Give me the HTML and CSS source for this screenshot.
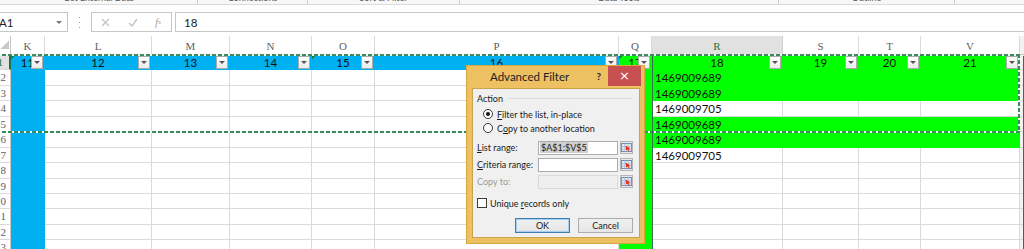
FILE: index.html
```html
<!DOCTYPE html>
<html>
<head>
<meta charset="utf-8">
<link rel="stylesheet" href="styles.css">
</head>
<body>
<div class="rtail">
  <div>Get External Data</div>
  <div>Connections</div>
  <div>Sort &amp; Filter</div>
  <div>Data Tools</div>
  <div>Outline</div>
  <div class="last"></div>
</div>

<div class="fbar">
  <div class="namebox"><span class="nb-text">A1</span><span class="dd"></span></div>
  <div class="grip"><svg width="3" height="11" viewBox="0 0 3 11"><rect x="1" y="0" width="1" height="1" fill="#9a9a9a"/><rect x="1" y="5" width="1" height="1" fill="#9a9a9a"/><rect x="1" y="10" width="1" height="1" fill="#9a9a9a"/></svg></div>
  <div class="fxbox">
    <span class="ic"><svg width="9" height="9" viewBox="0 0 9 9"><path d="M1 1L8 8M8 1L1 8" stroke="#c4c4c4" stroke-width="1.3"/></svg></span>
    <span class="ic"><svg width="10" height="9" viewBox="0 0 10 9"><path d="M1 5L4 8L9 1" stroke="#c4c4c4" stroke-width="1.4" fill="none"/></svg></span>
    <span class="ic fx"><i>f</i><sub>x</sub></span>
  </div>
  <div class="finput">18</div>
</div>

<div class="sheet">
  <!-- header row -->
  <div class="h corner"></div>
  <div class="h">K</div>
  <div class="h">L</div>
  <div class="h">M</div>
  <div class="h">N</div>
  <div class="h">O</div>
  <div class="h">P</div>
  <div class="h">Q</div>
  <div class="h sel">R</div>
  <div class="h">S</div>
  <div class="h">T</div>
  <div class="h">V</div>
  <div class="h edge"></div>

  <!-- row 1 -->
  <div class="rh sel">1</div>
  <div class="c blue hc tri"><span class="n">11</span><span class="fb"></span></div>
  <div class="c blue hc"><span class="n">12</span><span class="fb"></span></div>
  <div class="c blue hc"><span class="n">13</span><span class="fb"></span></div>
  <div class="c blue hc"><span class="n">14</span><span class="fb"></span></div>
  <div class="c blue hc tri"><span class="n">15</span><span class="fb"></span></div>
  <div class="c blue hc"><span class="n">16</span><span class="fb"></span></div>
  <div class="c green hc tri"><span class="n">17</span><span class="fb"></span></div>
  <div class="c green hc"><span class="n">18</span><span class="fb"></span></div>
  <div class="c green hc"><span class="n">19</span><span class="fb"></span></div>
  <div class="c green hc"><span class="n">20</span><span class="fb"></span></div>
  <div class="c green hc"><span class="n">21</span><span class="fb"></span></div>
  <div class="c edge"></div>

  <!-- row 2 -->
  <div class="rh">2</div>
  <div class="c blue"></div><div class="c"></div><div class="c"></div><div class="c"></div><div class="c"></div><div class="c"></div>
  <div class="c green"></div><div class="c green t">1469009689</div><div class="c green"></div><div class="c green"></div><div class="c green"></div>
  <div class="c edge"></div>

  <!-- row 3 -->
  <div class="rh">3</div>
  <div class="c blue"></div><div class="c"></div><div class="c"></div><div class="c"></div><div class="c"></div><div class="c"></div>
  <div class="c green"></div><div class="c green t">1469009689</div><div class="c green"></div><div class="c green"></div><div class="c green"></div>
  <div class="c edge"></div>

  <!-- row 4 -->
  <div class="rh">4</div>
  <div class="c blue"></div><div class="c"></div><div class="c"></div><div class="c"></div><div class="c"></div><div class="c"></div>
  <div class="c green"></div><div class="c t">1469009705</div><div class="c"></div><div class="c"></div><div class="c"></div>
  <div class="c edge"></div>

  <!-- row 5 -->
  <div class="rh">5</div>
  <div class="c blue"></div><div class="c"></div><div class="c"></div><div class="c"></div><div class="c"></div><div class="c"></div>
  <div class="c green"></div><div class="c green t">1469009689</div><div class="c green"></div><div class="c green"></div><div class="c green"></div>
  <div class="c edge"></div>

  <!-- row 6 -->
  <div class="rh">6</div>
  <div class="c blue"></div><div class="c"></div><div class="c"></div><div class="c"></div><div class="c"></div><div class="c"></div>
  <div class="c green"></div><div class="c green t">1469009689</div><div class="c green"></div><div class="c green"></div><div class="c green"></div>
  <div class="c edge"></div>

  <!-- row 7 -->
  <div class="rh">7</div>
  <div class="c blue"></div><div class="c"></div><div class="c"></div><div class="c"></div><div class="c"></div><div class="c"></div>
  <div class="c green"></div><div class="c t">1469009705</div><div class="c"></div><div class="c"></div><div class="c"></div>
  <div class="c edge"></div>

  <!-- rows 8-13 -->
  <div class="rh">8</div>
  <div class="c blue"></div><div class="c"></div><div class="c"></div><div class="c"></div><div class="c"></div><div class="c"></div>
  <div class="c green"></div><div class="c"></div><div class="c"></div><div class="c"></div><div class="c"></div>
  <div class="c edge"></div>

  <div class="rh">9</div>
  <div class="c blue"></div><div class="c"></div><div class="c"></div><div class="c"></div><div class="c"></div><div class="c"></div>
  <div class="c green"></div><div class="c"></div><div class="c"></div><div class="c"></div><div class="c"></div>
  <div class="c edge"></div>

  <div class="rh">10</div>
  <div class="c blue"></div><div class="c"></div><div class="c"></div><div class="c"></div><div class="c"></div><div class="c"></div>
  <div class="c green"></div><div class="c"></div><div class="c"></div><div class="c"></div><div class="c"></div>
  <div class="c edge"></div>

  <div class="rh">11</div>
  <div class="c blue"></div><div class="c"></div><div class="c"></div><div class="c"></div><div class="c"></div><div class="c"></div>
  <div class="c green"></div><div class="c"></div><div class="c"></div><div class="c"></div><div class="c"></div>
  <div class="c edge"></div>

  <div class="rh">12</div>
  <div class="c blue"></div><div class="c"></div><div class="c"></div><div class="c"></div><div class="c"></div><div class="c"></div>
  <div class="c green"></div><div class="c"></div><div class="c"></div><div class="c"></div><div class="c"></div>
  <div class="c edge"></div>

  <div class="rh">13</div>
  <div class="c blue"></div><div class="c"></div><div class="c"></div><div class="c"></div><div class="c"></div><div class="c"></div>
  <div class="c green"></div><div class="c"></div><div class="c"></div><div class="c"></div><div class="c"></div>
  <div class="c edge"></div>

  <!-- overlays -->
  <div class="marquee"></div>
  <div class="active"></div>
</div>

<div class="dlg">
  <div class="dlg-title">
    <span class="dt">Advanced Filter</span>
    <span class="help">?</span>
    <span class="close">×</span>
  </div>
  <div class="dlg-body">
    <div class="grp"><span>Action</span><i class="rule"></i></div>
    <div class="opt"><span class="radio on"></span><span><u>F</u>ilter the list, in-place</span></div>
    <div class="opt"><span class="radio"></span><span>C<u>o</u>py to another location</span></div>
    <div class="field first">
      <span class="fl"><u>L</u>ist range:</span>
      <span class="inp"><span class="seltext">$A$1:$V$5</span></span>
      <span class="ref"><svg width="11" height="9" viewBox="0 0 11 9"><rect x="0.5" y="0.5" width="10" height="8" fill="#dfe8f5" stroke="#6f8db8"/><path d="M0.5 3.5H10.5M0.5 6.2H10.5M3.8 0.5V8.5M7.2 0.5V8.5" stroke="#a9bcd8" stroke-width="0.8"/><path d="M4.5 2.5L9.5 5.5L7.6 6L8.6 8L7.6 8.5L6.6 6.5L5.2 7.6Z" fill="#e2321d"/></svg></span>
    </div>
    <div class="field">
      <span class="fl"><u>C</u>riteria range:</span>
      <span class="inp"></span>
      <span class="ref"><svg width="11" height="9" viewBox="0 0 11 9"><rect x="0.5" y="0.5" width="10" height="8" fill="#dfe8f5" stroke="#6f8db8"/><path d="M0.5 3.5H10.5M0.5 6.2H10.5M3.8 0.5V8.5M7.2 0.5V8.5" stroke="#a9bcd8" stroke-width="0.8"/><path d="M4.5 2.5L9.5 5.5L7.6 6L8.6 8L7.6 8.5L6.6 6.5L5.2 7.6Z" fill="#e2321d"/></svg></span>
    </div>
    <div class="field dis">
      <span class="fl">Copy to:</span>
      <span class="inp"></span>
      <span class="ref"><svg width="11" height="9" viewBox="0 0 11 9"><rect x="0.5" y="0.5" width="10" height="8" fill="#dfe8f5" stroke="#6f8db8"/><path d="M0.5 3.5H10.5M0.5 6.2H10.5M3.8 0.5V8.5M7.2 0.5V8.5" stroke="#a9bcd8" stroke-width="0.8"/><path d="M4.5 2.5L9.5 5.5L7.6 6L8.6 8L7.6 8.5L6.6 6.5L5.2 7.6Z" fill="#e2321d"/></svg></span>
    </div>
    <div class="chk"><span class="box"></span><span>Unique <u>r</u>ecords only</span></div>
    <div class="btns"><span class="btn def">OK</span><span class="btn">Cancel</span></div>
  </div>
</div>
</body>
</html>
```
FILE: styles.css
```css
html, body {
  margin: 0;
  padding: 0;
}
body {
  width: 1024px;
  height: 249px;
  overflow: hidden;
  background: #ffffff;
  font-family: Lato, "Liberation Sans", sans-serif;
  position: relative;
  color: #000;
}

/* ribbon remnant */
.rtail {
  height: 4px;
  border-bottom: 1px solid #dcdcdc;
  background: #f7f7f7;
  display: grid;
  grid-template-columns: 198px 110px 152px 319px 176px 1fr;
  overflow: hidden;
}
.rtail > div {
  height: 14px;
  margin-top: -8px;
  border-right: 1px solid #d0d0d0;
  text-align: center;
  font-size: 9px;
  line-height: 12px;
  color: #555;
  white-space: nowrap;
}
.rtail > .last { border-right: none; }

/* formula bar */
.fbar {
  display: flex;
  height: 20px;
  margin-top: 7px;
  margin-bottom: 4px;
  font-size: 11.5px;
}
.namebox {
  width: 69px;
  margin-left: -1px;
  box-sizing: border-box;
  border: 1px solid #c6c6c6;
  display: flex;
  align-items: center;
  justify-content: space-between;
  padding-right: 5px;
}
.nb-text {
  margin-left: -1px;
  color: #222;
}
.dd {
  width: 0;
  height: 0;
  border-left: 3px solid transparent;
  border-right: 3px solid transparent;
  border-top: 3px solid #777;
}
.grip {
  width: 23px;
  display: flex;
  align-items: center;
  justify-content: center;
}
.fxbox {
  width: 81px;
  box-sizing: border-box;
  border: 1px solid #c6c6c6;
  display: grid;
  grid-template-columns: 27px 27px 1fr;
  align-items: center;
  justify-items: center;
}
.ic { display: flex; align-items: center; }
.fx {
  font-family: "Liberation Serif", serif;
  color: #a8a8a8;
  font-size: 11px;
  margin-left: -1px;
}
.fx sub { font-size: 7px; font-style: italic; vertical-align: -1px; }
.finput {
  flex: 1;
  margin-left: 3px;
  box-sizing: border-box;
  border: 1px solid #c6c6c6;
  border-right: none;
  padding-left: 8px;
  display: flex;
  align-items: center;
  color: #222;
}

/* sheet */
.sheet {
  position: relative;
  display: grid;
  grid-template-columns: 11px 34px 107px 78px 82px 63px 244px 33px 131px 76px 62px 99px 4px;
  grid-template-rows: 19px repeat(13, 15.45px);
}
.h {
  box-sizing: border-box;
  border-right: 1px solid #dadada;
  border-bottom: 1px solid #c8c8c8;
  display: flex;
  align-items: center;
  justify-content: center;
  padding-top: 2px;
  font-family: "Liberation Serif", serif;
  font-size: 11px;
  color: #5f5f5f;
}
.h.sel {
  background: #e1e1e1;
  color: #217346;
  border-right-color: #d0d0d0;
}
.h.corner {
  border-right: 1px solid #c8c8c8;
  background: linear-gradient(135deg, transparent 0 50%, #c9c9c9 50%) 1px 4px / 8px 9px no-repeat;
}
.h.edge {
  border-right: none;
  background: #f2f2f2;
}
.rh {
  box-sizing: border-box;
  border-right: 1px solid #c8c8c8;
  border-bottom: 1px solid #dadada;
  text-align: right;
  padding-right: 4px;
  font-family: "Liberation Serif", serif;
  font-size: 11px;
  line-height: 15px;
  color: #5f5f5f;
  overflow: hidden;
  white-space: nowrap;
  direction: rtl;
}
.rh.sel {
  color: #217346;
  background: #e1e1e1;
  border-right: 2px solid #217346;
  padding-right: 6px;
}
.c {
  box-sizing: border-box;
  border-right: 1px solid #dadada;
  border-bottom: 1px solid #dadada;
  font-size: 11.5px;
  line-height: 15px;
  overflow: hidden;
  white-space: nowrap;
  min-width: 0;
}
.c.edge {
  border-right: none;
  background: #f2f2f2;
}
.blue {
  background-color: #00b0f0;
  border-color: #00b0f0;
}
.green {
  background-color: #00ff00;
  border-color: #00ff00;
}
.t {
  padding-left: 3px;
  color: #111;
}
.hc {
  display: grid;
  align-items: center;
}
.hc > * { grid-area: 1 / 1; }
.hc .n {
  justify-self: center;
  color: #111;
}
.tri {
  background-image: linear-gradient(135deg, #1f7a3f 0 3px, transparent 3px);
  background-size: 6px 6px;
  background-repeat: no-repeat;
}
.fb {
  justify-self: end;
  margin-right: 1px;
  width: 12px;
  height: 13px;
  box-sizing: border-box;
  border: 1px solid #ababab;
  background: linear-gradient(#ffffff, #ececec);
  display: flex;
  align-items: center;
  justify-content: center;
}
.fb::after {
  content: "";
  width: 0;
  height: 0;
  border-left: 3px solid transparent;
  border-right: 3px solid transparent;
  border-top: 3px solid #555;
}

/* overlays on the grid */
.marquee {
  position: absolute;
  grid-row: 2 / 7;
  grid-column: 1 / 13;
  top: -1px;
  bottom: -1px;
  left: -10px;
  right: 0;
  background:
    repeating-linear-gradient(90deg, #3a8a60 0 4px, #f4fff8 4px 6px) top left / 100% 2px no-repeat,
    repeating-linear-gradient(90deg, #3a8a60 0 4px, #f4fff8 4px 6px) bottom left / 100% 2px no-repeat,
    repeating-linear-gradient(180deg, #3a8a60 0 4px, #f4fff8 4px 6px) top right / 2px 100% no-repeat;
}
.active {
  position: absolute;
  grid-row: 2;
  grid-column: 9;
  top: 1px;
  left: 0;
  right: 0;
  bottom: 0;
  border: 1px solid #3d6b50;
  border-top: none;
}
.active::after {
  content: "";
  position: absolute;
  right: -4px;
  bottom: -4px;
  width: 5px;
  height: 5px;
  background: #217346;
  border: 1px solid #fff;
}

/* dialog */
.dlg {
  position: absolute;
  left: 466px;
  top: 65px;
  width: 179px;
  height: 179px;
  box-sizing: border-box;
  background: #edc162;
  border: 1px solid #d8a640;
  display: flex;
  flex-direction: column;
  font-family: Lato, "Liberation Sans", sans-serif;
}
.dlg-title {
  height: 22px;
  display: flex;
  align-items: flex-start;
  position: relative;
}
.dt {
  margin-left: 23px;
  margin-top: 4px;
  font-size: 11.5px;
  color: #222;
}
.help {
  margin-left: auto;
  margin-top: 4px;
  font-size: 10px;
  font-weight: 700;
  color: #222;
}
.close {
  margin-left: 7px;
  margin-right: 3px;
  width: 33px;
  height: 20px;
  background: #c75050;
  color: #fff;
  font-size: 13px;
  line-height: 19px;
  text-align: center;
  font-family: "DejaVu Sans", sans-serif;
}
.dlg-body {
  flex: 1;
  margin: 0 4px 5px 5px;
  background: #f0f0f0;
  border: 1px solid #c9a44e;
  padding: 3px 6px 0 4px;
  font-size: 9px;
  color: #1a1a1a;
  display: flex;
  flex-direction: column;
}
.grp {
  height: 12px;
  display: flex;
  align-items: center;
  gap: 5px;
}
.grp .rule {
  flex: 1;
  height: 1px;
  background: #dcdcdc;
  margin-top: 1px;
}
.opt {
  height: 14px;
  display: flex;
  align-items: center;
  padding-left: 6px;
  gap: 4px;
}
.grp + .opt { margin-top: 3px; }
.radio {
  width: 10px;
  height: 10px;
  box-sizing: border-box;
  border: 1px solid #3c3c3c;
  border-radius: 50%;
  background: #fff;
  display: flex;
  align-items: center;
  justify-content: center;
}
.radio.on::after {
  content: "";
  width: 4px;
  height: 4px;
  border-radius: 50%;
  background: #111;
}
.field {
  height: 15px;
  margin-top: 2px;
  display: flex;
  align-items: center;
}
.field.first { margin-top: 5px; }
.fl {
  width: 61px;
  white-space: nowrap;
}
.inp {
  width: 80px;
  height: 14px;
  box-sizing: border-box;
  border: 1px solid #abadb3;
  background: #fff;
  display: flex;
  align-items: center;
  padding-left: 1px;
}
.seltext {
  background: #cfcfcf;
  padding: 0 1px;
  line-height: 11px;
  color: #222;
}
.field.dis .fl { color: #9a9a9a; }
.field.dis .inp {
  background: #efefef;
  border-color: #dadada;
}
.ref {
  margin-left: 2px;
  width: 13px;
  height: 13px;
  box-sizing: border-box;
  border: 1px solid #b5b5b5;
  background: #e8e8e8;
  display: flex;
  align-items: center;
  justify-content: center;
}
.chk {
  height: 14px;
  margin-top: 7px;
  display: flex;
  align-items: center;
  gap: 3px;
}
.box {
  width: 10px;
  height: 10px;
  box-sizing: border-box;
  border: 1px solid #3c3c3c;
  background: #fff;
}
.btns {
  margin-top: 8px;
  display: flex;
  justify-content: flex-end;
  gap: 8px;
  padding-right: 0;
}
.btn {
  width: 55px;
  height: 15px;
  box-sizing: border-box;
  border: 1px solid #acacac;
  background: linear-gradient(#f0f0f0, #e5e5e5);
  display: flex;
  align-items: center;
  justify-content: center;
  color: #1a1a1a;
}
.btn.def {
  border-color: #3c7fb1;
  box-shadow: inset 0 0 0 1px #a7cdf0;
}
```
